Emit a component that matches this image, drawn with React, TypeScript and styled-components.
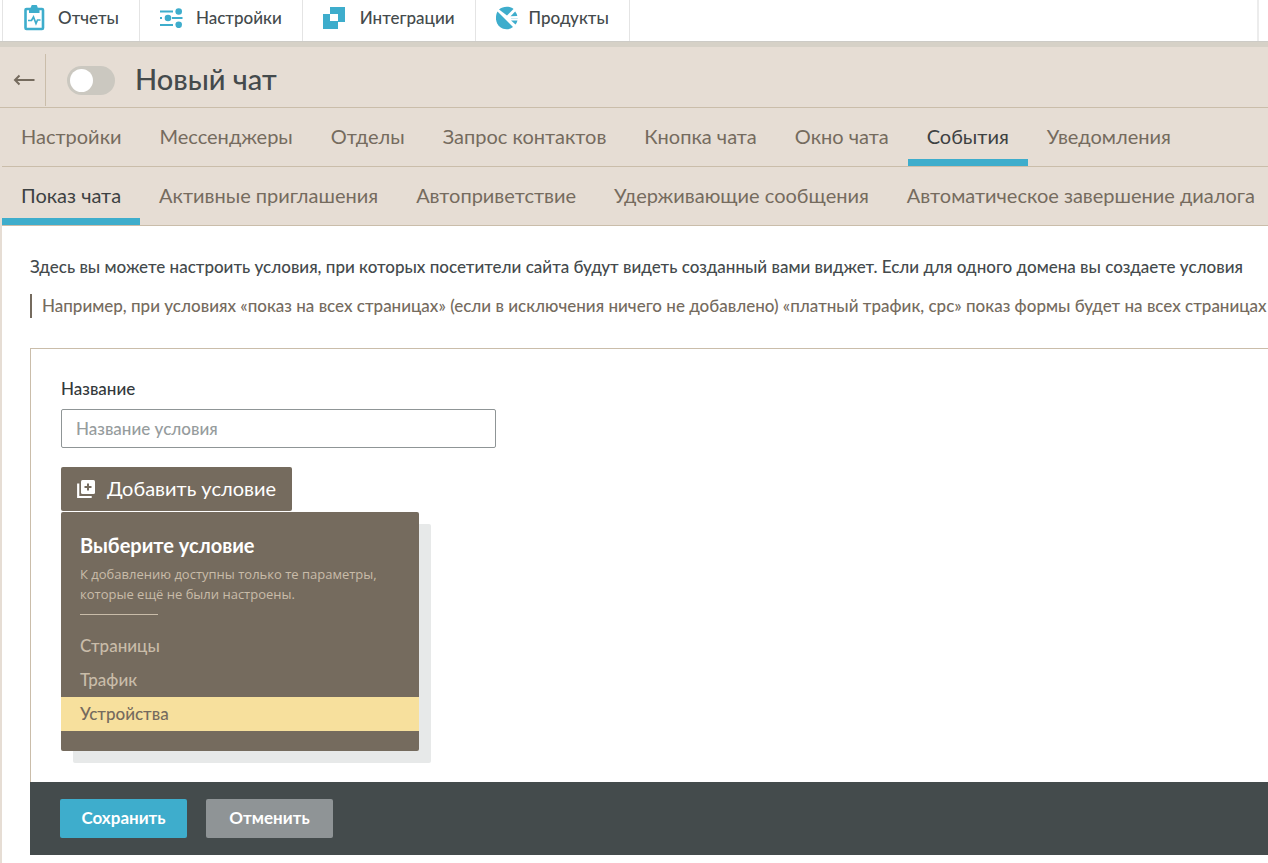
import React, { useState } from "react";
import styled, { createGlobalStyle } from "styled-components";

const color = {
  accent: "#3eadcc",
  sand: "#e6ddd4",
  sandLine: "#cabdaa",
  brown: "#756b5e",
  ink: "#444a4c",
  slate: "#444b4c",
};

const Global = createGlobalStyle`
  *, *::before, *::after { box-sizing: border-box; }
  body {
    margin: 0;
    background: #fff;
    color: ${color.ink};
    font-family: Lato, "Noto Sans", sans-serif;
    overflow-x: hidden;
  }
  button, input { font-family: inherit; }
`;

const Page = styled.div`
  min-height: 100vh;
  overflow: hidden;
  display: flex;
  flex-direction: column;
`;

const TopNav = styled.nav`
  display: flex;
  height: 42px;
  padding: 0 9px 0 2px;
  border-bottom: 1px solid #cdcbc6;
`;

const TopLink = styled.a<{ $gap: number }>`
  display: flex;
  align-items: center;
  gap: ${(p) => p.$gap}px;
  padding: 0 20px 6px 20px;
  border-right: 1px solid #e4e4e4;
  color: ${color.ink};
  font-size: 17px;
  font-weight: 500;
  line-height: 24px;
  text-decoration: none;
  white-space: nowrap;

  &:first-child {
    border-left: 1px solid #e4e4e4;
  }
`;

const TopRest = styled.div`
  flex: 1;
  border-right: 2px solid #ececec;
`;

const Main = styled.main`
  flex: 1;
  border-left: 2px solid ${color.sand};
`;

const Header = styled.header`
  display: flex;
  height: 66px;
  margin-left: -2px;
  padding: 7px 0 0 2px;
  border-top: 5px solid #d6d1c7;
  border-bottom: 1px solid ${color.sandLine};
  background: ${color.sand};
`;

const Back = styled.a`
  display: flex;
  align-items: center;
  justify-content: center;
  width: 44px;
  height: 52px;
  border-right: 1px solid ${color.sandLine};
  color: ${color.brown};
`;

const Toggle = styled.input`
  appearance: none;
  flex: none;
  width: 48px;
  height: 29px;
  margin: 12px 20px 0 21px;
  padding: 3px;
  border-radius: 15px;
  background: #cbc8c0;
  cursor: pointer;

  &::before {
    content: "";
    display: block;
    width: 23px;
    height: 23px;
    border-radius: 50%;
    background: #fff;
  }
  &:checked { background: ${color.accent}; }
  &:checked::before { margin-left: 19px; }
`;

const Title = styled.h1`
  margin: 0;
  color: ${color.ink};
  font-size: 29px;
  font-weight: 500;
  line-height: 50px;
`;

const Tabs = styled.nav`
  display: flex;
  height: 59px;
  border-bottom: 1px solid ${color.sandLine};
  background: ${color.sand};
`;

const Tab = styled.a<{ $active?: boolean }>`
  padding: 0 19px;
  border-bottom: 7px solid ${(p) => (p.$active ? color.accent : "transparent")};
  color: ${(p) => (p.$active ? "#3d4142" : color.brown)};
  font-size: 20px;
  line-height: 56px;
  text-decoration: none;
  white-space: nowrap;
`;

const Content = styled.div`
  padding: 29px 0 8px 28px;
`;

const Intro = styled.p`
  margin: 0;
  font-size: 17px;
  font-weight: 500;
  line-height: 24px;
  white-space: nowrap;
`;

const Note = styled.blockquote`
  margin: 15px 0 30px;
  padding-left: 10px;
  border-left: 2px solid ${color.brown};
  color: ${color.brown};
  font-size: 17px;
  font-weight: 500;
  line-height: 24px;
  white-space: nowrap;
`;

const Panel = styled.form`
  display: block;
`;

const PanelBody = styled.div`
  display: flex;
  flex-direction: column;
  align-items: flex-start;
  padding: 28px 30px 31px;
  border: 1px solid ${color.sandLine};
  border-width: 1px 0 0 1px;
`;

const Label = styled.label`
  margin-bottom: 8px;
  color: #33393b;
  font-size: 17px;
  font-weight: 500;
  line-height: 24px;
`;

const TextInput = styled.input`
  width: 435px;
  max-width: 100%;
  height: 39px;
  margin-bottom: 19px;
  padding: 0 14px;
  border: 1px solid #8f9596;
  border-radius: 2px;
  color: ${color.ink};
  font-size: 17px;
  font-weight: 500;

  &::placeholder { color: #969c9d; opacity: 1; }
`;

const AddButton = styled.button`
  display: flex;
  align-items: center;
  gap: 11px;
  height: 44px;
  margin-bottom: 1px;
  padding: 0 16px 2px 15px;
  border: 0;
  border-radius: 2px;
  background: ${color.brown};
  color: #fff;
  font-size: 20px;
  line-height: 24px;
  white-space: nowrap;

  svg { margin-top: 2px; }
`;

const Menu = styled.section`
  width: 358px;
  padding: 21px 0 20px;
  border-radius: 2px;
  background: ${color.brown};
  box-shadow: 12px 12px 0 #e7e9e9;
`;

const MenuHead = styled.div`
  padding: 0 19px;

  &::after {
    content: "";
    display: block;
    width: 78px;
    height: 1px;
    margin: 10px 0 14px;
    background: #c9bca9;
  }
`;

const MenuTitle = styled.h2`
  margin: 0 0 7px;
  color: #fff;
  font-size: 20px;
  font-weight: 700;
  line-height: 24px;
`;

const MenuHint = styled.p`
  margin: 0;
  color: #c9bca9;
  font-family: "Open Sans", "Noto Sans", sans-serif;
  font-size: 13px;
  line-height: 20px;
`;

const MenuItem = styled.button<{ $active?: boolean }>`
  display: block;
  width: 100%;
  height: 34px;
  padding: 0 19px;
  border: 0;
  background: ${(p) => (p.$active ? "#f7e09d" : "transparent")};
  color: ${(p) => (p.$active ? color.brown : "#c9bca9")};
  font-size: 17px;
  font-weight: 500;
  line-height: 32px;
  text-align: left;
`;

const Footer = styled.footer`
  display: flex;
  gap: 19px;
  padding: 17px 30px;
  background: ${color.slate};
`;

const FooterButton = styled.button<{ $primary?: boolean }>`
  width: 127px;
  height: 39px;
  padding: 0 0 2px;
  border: 0;
  border-radius: 2px;
  background: ${(p) => (p.$primary ? color.accent : "#8f9496")};
  color: #fff;
  font-size: 17px;
  font-weight: 700;
`;

const ReportsIcon = () => (
  <svg width="22" height="26" viewBox="0 0 22 26" aria-hidden="true">
    <rect x="2.500" y="4" width="17.500" height="20" rx="1" fill="none" stroke={color.accent} strokeWidth="2.600" />
    <path d="M6 8V3.500L8 2.500A3.200 3.200 0 0 1 14.500 2.500L16.500 3.500V8z" fill={color.accent} />
    <path d="M5 15.500h3.500l2-3.500 2.500 6.500 1.500-3.500H17.500" fill="none" stroke={color.accent} strokeWidth="1.700" />
  </svg>
);

const SettingsIcon = () => (
  <svg width="23" height="20" viewBox="0 0 23 20" aria-hidden="true">
    <g stroke={color.accent} strokeWidth="1.800">
      <path d="M0 3.500h13M0 17h13M0 10h2M12 10h10.500" />
    </g>
    <g fill={color.accent}>
      <circle cx="18.700" cy="3.500" r="3.300" />
      <circle cx="8" cy="10" r="3.300" />
      <circle cx="18.700" cy="16.800" r="3.300" />
    </g>
  </svg>
);

const IntegrationsIcon = () => (
  <svg width="22" height="22" viewBox="0 0 22 22" aria-hidden="true">
    <path fillRule="evenodd" fill={color.accent} d="M7 0h15v15h-7v7H0V7h7zM7 7v7h8V7z" />
  </svg>
);

const ProductsIcon = () => (
  <svg width="22" height="24" viewBox="0 0 22 24" aria-hidden="true">
    <g fill={color.accent}>
      <path d="M3 3.500C7 0 14 0 17.500 3L11 9.500z" />
      <path d="M1.500 5.500C-1.500 11 0 18 4 21C8 24 13 24 17 21z" />
      <path d="M19.200 5.500A11 11 0 0 1 21.300 10L14.500 10.300z" />
      <path d="M15 12.500h6.800" stroke={color.accent} strokeWidth="1" opacity=".25" />
      <path d="M15 14.500h6.500A11 11 0 0 1 19.500 18.500z" />
    </g>
  </svg>
);

const BackIcon = () => (
  <svg width="22" height="14" viewBox="0 0 22 14" aria-hidden="true">
    <path d="M21.500 7H2M6.500 2.500L2 7l4.500 4.500" fill="none" stroke="currentColor" strokeWidth="2" />
  </svg>
);

const AddIcon = () => (
  <svg width="20" height="20" viewBox="0 0 20 20" aria-hidden="true">
    <path d="M2.200 4.500V18h13.500" fill="none" stroke="#fff" strokeWidth="2.200" />
    <rect x="5" y="1" width="14" height="14" rx="1.500" fill="#fff" />
    <path d="M12 4.500v7M8.500 8h7" stroke={color.brown} strokeWidth="2" />
  </svg>
);

const products = [
  { label: "Отчеты", icon: <ReportsIcon />, gap: 13 },
  { label: "Настройки", icon: <SettingsIcon />, gap: 13 },
  { label: "Интеграции", icon: <IntegrationsIcon />, gap: 15 },
  { label: "Продукты", icon: <ProductsIcon />, gap: 11 },
];

const tabs = [
  "Настройки",
  "Мессенджеры",
  "Отделы",
  "Запрос контактов",
  "Кнопка чата",
  "Окно чата",
  "События",
  "Уведомления",
];

const subTabs = [
  "Показ чата",
  "Активные приглашения",
  "Автоприветствие",
  "Удерживающие сообщения",
  "Автоматическое завершение диалога",
];

const conditions = ["Страницы", "Трафик", "Устройства"];

export default function App() {
  const [enabled, setEnabled] = useState(false);

  return (
    <>
      <Global />
      <Page>
        <TopNav>
          {products.map((p) => (
            <TopLink key={p.label} href="#" $gap={p.gap}>
              {p.icon}
              {p.label}
            </TopLink>
          ))}
          <TopRest />
        </TopNav>
        <Main>
          <Header>
            <Back href="#" aria-label="Назад">
              <BackIcon />
            </Back>
            <Toggle
              type="checkbox"
              aria-labelledby="chat-title"
              checked={enabled}
              onChange={(e) => setEnabled(e.target.checked)}
            />
            <Title id="chat-title">Новый чат</Title>
          </Header>
          <Tabs>
            {tabs.map((t) => (
              <Tab key={t} href="#" $active={t === "События"}>
                {t}
              </Tab>
            ))}
          </Tabs>
          <Tabs>
            {subTabs.map((t) => (
              <Tab key={t} href="#" $active={t === "Показ чата"}>
                {t}
              </Tab>
            ))}
          </Tabs>
          <Content>
            <Intro>
              Здесь вы можете настроить условия, при которых посетители сайта будут видеть созданный вами виджет. Если
              для одного домена вы создаете условия
            </Intro>
            <Note>
              Например, при условиях «показ на всех страницах» (если в исключения ничего не добавлено) «платный трафик,
              cpc» показ формы будет на всех страницах
            </Note>
            <Panel onSubmit={(e) => e.preventDefault()}>
              <PanelBody>
                <Label htmlFor="condition-name">Название</Label>
                <TextInput id="condition-name" type="text" placeholder="Название условия" />
                <AddButton type="button">
                  <AddIcon />
                  Добавить условие
                </AddButton>
                <Menu>
                  <MenuHead>
                    <MenuTitle>Выберите условие</MenuTitle>
                    <MenuHint>К добавлению доступны только те параметры, которые ещё не были настроены.</MenuHint>
                  </MenuHead>
                  {conditions.map((c) => (
                    <MenuItem key={c} type="button" $active={c === "Устройства"}>
                      {c}
                    </MenuItem>
                  ))}
                </Menu>
              </PanelBody>
              <Footer>
                <FooterButton type="submit" $primary>
                  Сохранить
                </FooterButton>
                <FooterButton type="button">Отменить</FooterButton>
              </Footer>
            </Panel>
          </Content>
        </Main>
      </Page>
    </>
  );
}
